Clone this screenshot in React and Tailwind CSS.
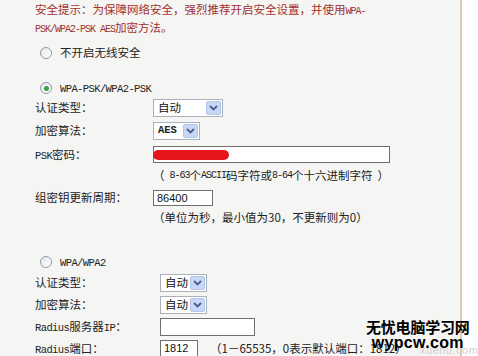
import React from "react"

const M = ({ children, size = "text-[10.5px] tracking-[-0.6px]" }) => (
  <span className={`font-['Liberation_Mono',monospace] leading-none ${size}`}>{children}</span>
)

const H = "text-[10px] tracking-[-1px]"

const Radio = ({ checked, children }) => (
  <div className="flex items-center h-[18px]">
    <span className="ml-[5px] w-[12px] h-[12px] rounded-full border border-[#8d9aa6] bg-gradient-to-br from-[#e4e6e8] to-white flex items-center justify-center">
      {checked && <span className="w-[5px] h-[5px] rounded-full bg-[#3f9a4a]" />}
    </span>
    <span className="ml-[8px] text-[#222]">{children}</span>
  </div>
)

const Select = ({ value, w, mono }) => (
  <div className={`${w} h-[18px] bg-white border border-[#a9b1bb] flex items-center justify-between pl-[4px] pr-[1px]`}>
    <span className={mono ? "font-['Liberation_Mono',monospace] text-[10.5px] font-bold text-[#222]" : "text-[#111]"}>{value}</span>
    <span className="w-[15px] h-[14px] bg-[#c9d7f6] border border-[#b3c5ee] rounded-[2px] flex items-center justify-center">
      <svg width="9" height="6" viewBox="0 0 9 6">
        <path d="M1 1 L4.5 4.5 L8 1" fill="none" stroke="#4a5f88" strokeWidth="1.8" />
      </svg>
    </span>
  </div>
)

const Row = ({ label, lw, mt, h = "h-[18px]", children }) => (
  <div className={`flex items-center ${h} ${mt}`}>
    <div className={`${lw} shrink-0 text-[#222]`}>{label}</div>
    {children}
  </div>
)

export default function App() {
  return (
    <div className="w-[478px] h-[356px] overflow-hidden flex bg-white font-['Noto_Sans_CJK_SC',sans-serif] text-[11.5px] relative">
      <div className="w-[462px] shrink-0 bg-[#f5f5f3] border-r-2 border-[#d8cdb2] pl-[35px] flex flex-col">
        <p className="leading-[18px] text-[#a3302d] h-[36px]">
          安全提示：为保障网络安全，强烈推荐开启安全设置，并使用<M size={H}>WPA-</M>
          <br />
          <M size={H}>PSK/WPA2-PSK AES</M>加密方法。
        </p>

        <div className="mt-[8px]">
          <Radio>不开启无线安全</Radio>
        </div>
        <div className="mt-[17px]">
          <Radio checked><M>WPA-PSK/WPA2-PSK</M></Radio>
        </div>

        <Row label="认证类型：" lw="w-[118px]" mt="mt-[2px]">
          <Select value="自动" w="w-[70px]" />
        </Row>
        <Row label="加密算法：" lw="w-[118px]" mt="mt-[5px]">
          <Select value="AES" w="w-[47px]" mono />
        </Row>
        <Row label={<><M>PSK</M>密码：</>} lw="w-[118px]" mt="mt-[6px]" h="h-[17px]">
          <div className="w-[237px] h-[17px] bg-white border border-[#6f6f6f] flex items-center">
            <span className="w-[76px] h-[10px] rounded-full bg-[#e8141b] -ml-[1px]" />
          </div>
        </Row>
        <div className="mt-[5px] h-[16px] flex items-center pl-[118px] text-[#222]">
          （<M size={H}>&nbsp;8-63</M>个<M size={H}>ASCII</M>码字符或<M size={H}>8-64</M>个十六进制字符<M size={H}>&nbsp;</M>）
        </div>
        <Row label="组密钥更新周期：" lw="w-[118px]" mt="mt-[6px]" h="h-[16px]">
          <div className="w-[60px] h-[16px] bg-white border border-[#6f6f6f] flex items-center pl-[3px] font-['Liberation_Sans',sans-serif] text-[11px] text-[#111]">
            86400
          </div>
        </Row>
        <div className="mt-[4px] h-[16px] flex items-center pl-[118px] text-[#222]">
          （单位为秒，最小值为30，不更新则为0）
        </div>

        <div className="mt-[27px]">
          <Radio><M>WPA/WPA2</M></Radio>
        </div>
        <Row label="认证类型：" lw="w-[125px]" mt="mt-[3px]">
          <Select value="自动" w="w-[47px]" />
        </Row>
        <Row label="加密算法：" lw="w-[125px]" mt="mt-[4px]" h="h-[17px]">
          <Select value="自动" w="w-[47px]" />
        </Row>
        <Row label={<><M>Radius</M>服务器<M>IP</M>：</>} lw="w-[125px]" mt="mt-[5px]">
          <div className="w-[95px] h-[18px] bg-white border border-[#6f6f6f]" />
        </Row>
        <Row label={<><M>Radius</M>端口：</>} lw="w-[125px]" mt="mt-[4px]" h="h-[17px]">
          <div className="w-[38px] h-[17px] bg-white border border-[#6f6f6f] flex items-center pl-[3px] font-['Liberation_Sans',sans-serif] text-[11px] text-[#111]">
            1812
          </div>
          <span className="ml-[12px] text-[#222] whitespace-nowrap">（1－65535，0表示默认端口：1812）</span>
        </Row>
      </div>
      <div className="flex-1 bg-white" />

      {/* site watermark */}
      <div className="absolute left-[420px] top-[342px] text-[11px] text-[#cfcfcf] font-['Liberation_Sans',sans-serif] tracking-[0.5px]">
        xuehu.com
      </div>
      <div className="absolute left-[366px] top-[319px] flex flex-col items-center leading-none">
        <span className="text-[15px] font-bold text-black tracking-[-0.2px]">无忧电脑学习网</span>
        <span className="mt-[1px] text-[16px] font-bold text-black font-['Liberation_Sans',sans-serif] tracking-[0.3px]">wypcw.com</span>
      </div>
    </div>
  )
}
